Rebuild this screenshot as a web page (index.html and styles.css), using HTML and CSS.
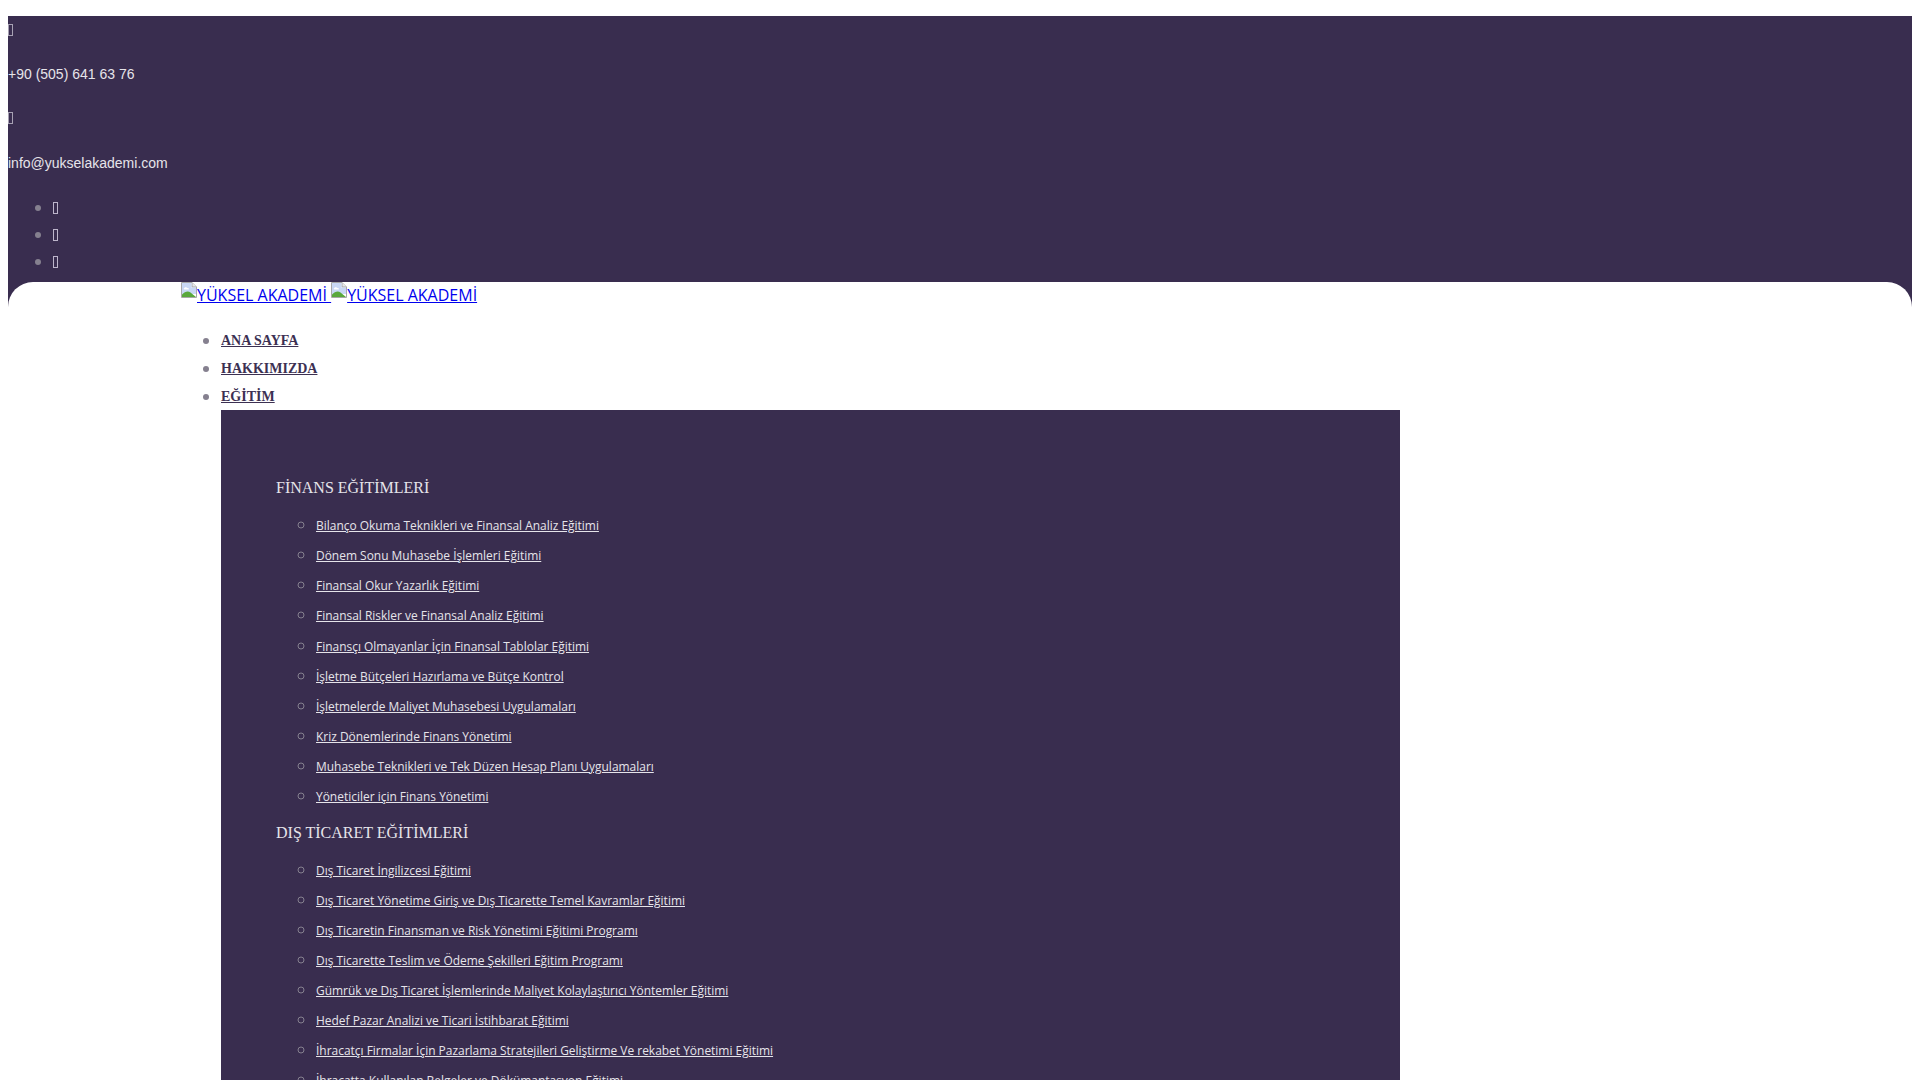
FILE: index.html
```html
<!DOCTYPE html>
<html lang="tr">
<head>
<meta charset="utf-8">
<title>YÜKSEL AKADEMİ</title>
<link rel="stylesheet" href="styles.css">
</head>
<body>
<div class="top-bar">
  <p><span class="tofu"></span></p>
  <p>+90 (505) 641 63 76</p>
  <p><span class="tofu"></span></p>
  <p>info@yukselakademi.com</p>
  <ul class="social">
    <li><span class="tofu tofu-light"></span></li>
    <li><span class="tofu tofu-light"></span></li>
    <li><span class="tofu tofu-light"></span></li>
  </ul>
</div>
<div class="band">
<header class="panel">
  <div class="container">
    <div class="logo">
      <a href="#"><svg class="broken" viewBox="0 0 16 16"><use href="#broken-icon"/></svg>YÜKSEL AKADEMİ </a>
      <a href="#"><svg class="broken" viewBox="0 0 16 16"><use href="#broken-icon"/></svg>YÜKSEL AKADEMİ</a>
    </div>
    <ul class="nav">
      <li><a href="#">ANA SAYFA</a></li>
      <li><a href="#">HAKKIMIZDA</a></li>
      <li><a href="#">EĞİTİM</a>
        <div class="mega">
          <ul class="groups">
            <li>FİNANS EĞİTİMLERİ
              <ul class="courses">
                <li><a href="#">Bilanço Okuma Teknikleri ve Finansal Analiz Eğitimi</a></li>
                <li><a href="#">Dönem Sonu Muhasebe İşlemleri Eğitimi</a></li>
                <li><a href="#">Finansal Okur Yazarlık Eğitimi</a></li>
                <li><a href="#">Finansal Riskler ve Finansal Analiz Eğitimi</a></li>
                <li><a href="#">Finansçı Olmayanlar İçin Finansal Tablolar Eğitimi</a></li>
                <li><a href="#">İşletme Bütçeleri Hazırlama ve Bütçe Kontrol</a></li>
                <li><a href="#">İşletmelerde Maliyet Muhasebesi Uygulamaları</a></li>
                <li><a href="#">Kriz Dönemlerinde Finans Yönetimi</a></li>
                <li><a href="#">Muhasebe Teknikleri ve Tek Düzen Hesap Planı Uygulamaları</a></li>
                <li><a href="#">Yöneticiler için Finans Yönetimi</a></li>
              </ul>
            </li>
            <li>DIŞ TİCARET EĞİTİMLERİ
              <ul class="courses courses-tight">
                <li><a href="#">Dış Ticaret İngilizcesi Eğitimi</a></li>
                <li><a href="#">Dış Ticaret Yönetime Giriş ve Dış Ticarette Temel Kavramlar Eğitimi</a></li>
                <li><a href="#">Dış Ticaretin Finansman ve Risk Yönetimi Eğitimi Programı</a></li>
                <li><a href="#">Dış Ticarette Teslim ve Ödeme Şekilleri Eğitim Programı</a></li>
                <li><a href="#">Gümrük ve Dış Ticaret İşlemlerinde Maliyet Kolaylaştırıcı Yöntemler Eğitimi</a></li>
                <li><a href="#">Hedef Pazar Analizi ve Ticari İstihbarat Eğitimi</a></li>
                <li><a href="#">İhracatçı Firmalar İçin Pazarlama Stratejileri Geliştirme Ve rekabet Yönetimi Eğitimi</a></li>
                <li><a href="#">İhracatta Kullanılan Belgeler ve Dökümantasyon Eğitimi</a></li>
              </ul>
            </li>
          </ul>
        </div>
      </li>
    </ul>
  </div>
</header>
</div>
<svg class="defs" aria-hidden="true">
  <symbol id="broken-icon" viewBox="0 0 16 16">
    <path d="M0.5 0.500H11L15.500 5V15.500H0.500Z" fill="#fff" stroke="#a8a8a8"/>
    <path d="M11 0.500V5H15.500" fill="#e8e8e8" stroke="#a8a8a8"/>
    <path d="M1 1H10.500V5.500H15V12H1Z" fill="#c9d8f5"/>
    <path d="M3 6.500c.4-1.500 2.600-1.800 3.500-.5c1.400-.3 2 1.300 1 1.500H3.500c-1 0-1.200-.8-.5-1Z" fill="#fff"/>
    <path d="M1 15V12.500C4 9.500 7 8.800 9.500 10.500C11.500 12 13 13.500 15 15Z" fill="#5aa83c"/>
  </symbol>
</svg>
</body>
</html>
```
FILE: styles.css
```css
html { overflow: hidden; }
body {
  margin: 16px 8px 8px;
  background: #fff;
  font-family: "Open Sans", sans-serif;
  font-size: 16px;
  line-height: 1.15;
}
.defs { position: absolute; width: 0; height: 0; }
.top-bar {
  background: #392d4f;
  color: #e6e4ea;
  font-family: "Liberation Sans", Arial, sans-serif;
  font-size: 14px;
  line-height: 16px;
  padding: 6px 0 2px;
  overflow: hidden;
}
.top-bar p { margin: 0 0 28.4px; height: 16px; }
.tofu {
  display: inline-block;
  box-sizing: border-box;
  width: 5px;
  height: 12px;
  border: 1px solid #a7a1b3;
  vertical-align: -0.6px;
}
.tofu-light { border-color: #bdb5cb; }
.social { margin: -0.6px 0 0; padding: 0 0 0 45px; font-family: "Open Sans", sans-serif; font-size: 16px; }
.social li { height: 27px; line-height: 17px; }
.social li::marker { color: #85808f; }
.band { background: #392d4f; }
.panel {
  background: #fff;
  border-radius: 25px 25px 0 0;
}
.container { margin-left: 173px; }
.logo { height: 44px; line-height: 26px; }
.logo a { color: #0000ee; }
.broken { width: 16px; height: 16px; vertical-align: 3px; }
.nav {
  margin: 0;
  padding: 0 0 0 40px;
  font-size: 16px;
  line-height: 28px;
}
.nav > li::marker { color: #85808f; }
.nav > li > a {
  color: #3c3052;
  font-family: "Liberation Serif", serif;
  font-size: 14px;
  font-weight: 700;
  line-height: 1;
  vertical-align: 1px;
}
.mega {
  background: #392d4f;
  width: 1179px;
  padding: 68px 0 60px 55px;
  box-sizing: border-box;
  color: #e6e4ea;
}
.groups { list-style: none; margin: 0; padding: 0; font-family: "Liberation Serif", serif; font-size: 16px; }
.groups > li { line-height: 20px; margin-bottom: 13.3px; }
.courses {
  margin: 0;
  padding: 11.2px 0 0 40px;
  font-family: "Open Sans", sans-serif;
  font-size: 16px;
  list-style: circle;
}
.courses-tight { padding-top: 10.3px; }
.courses li { line-height: 30.1px; }
.courses li::marker { color: #85808f; }
.courses a { color: #e6e4ea; font-size: 11.96px; line-height: 1; }
```
